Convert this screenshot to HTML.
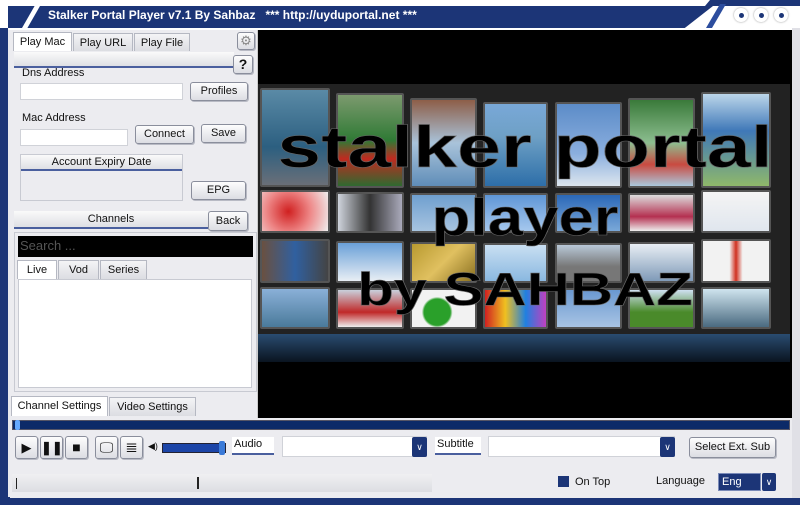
<!DOCTYPE html>
<html><head><meta charset="utf-8"><style>
*{margin:0;padding:0;box-sizing:border-box}
body{width:800px;height:505px;overflow:hidden;background:#e9e9ee;font-family:"Liberation Sans",sans-serif;font-size:11px;color:#111;position:relative}
.a{position:absolute}
.btn{position:absolute;background:linear-gradient(#fdfdfd,#dcdde3);border:1px solid #8a8e9c;border-radius:3px;text-align:center;font-size:11px;box-shadow:1px 1px 0 #b8bac4}
.inp{position:absolute;background:#fff;border:1px solid #d0d2d8}
.tab{position:absolute;background:linear-gradient(#f4f4f6,#dcdde2);border:1px solid #b5b8c2;border-bottom:none;text-align:center;font-size:11px;padding-top:3px}
.tab.on{background:#fff}
.t{position:absolute;border:2px solid #555;border-radius:2px}
.dd{position:absolute;background:#1c3577;color:#fff;font-size:9px;text-align:center;border-radius:2px}
.big{position:absolute;left:258px;width:534px;text-align:center;font-family:"Liberation Sans",sans-serif;font-weight:bold;color:#000;-webkit-text-stroke:0.6px #666;white-space:nowrap}
</style></head><body>
<div class="a" style="left:0;top:0;width:800px;height:30px;background:#fff"></div>
<div class="a" style="left:8px;top:6px;width:705px;height:22px;background:#1c3577;clip-path:polygon(0 0,100% 0,96% 100%,0 100%)"></div>
<div class="a" style="left:700px;top:0;width:100px;height:6px;background:#1c3577;clip-path:polygon(10% 0,100% 0,100% 100%,5% 100%)"></div>
<div class="a" style="left:22px;top:6px;width:18px;height:22px;background:#fff;clip-path:polygon(70% 0,100% 0,30% 100%,0 100%)"></div>
<div class="a" style="left:706px;top:4px;width:20px;height:24px;background:#2c4d9e;clip-path:polygon(70% 0,100% 0,30% 100%,0 100%)"></div>
<div class="a" style="left:48px;top:8px;color:#fff;font-weight:bold;font-size:12px;white-space:pre">Stalker Portal Player v7.1 By Sahbaz   *** http://uyduportal.net ***</div>
<div class="a" style="left:734px;top:8px;width:14px;height:14px;border-radius:7px;background:#fff;box-shadow:0 0 2px #999"></div>
<div class="a" style="left:739px;top:13px;width:5px;height:5px;border-radius:3px;background:#1c3577"></div>
<div class="a" style="left:754px;top:8px;width:14px;height:14px;border-radius:7px;background:#fff;box-shadow:0 0 2px #999"></div>
<div class="a" style="left:759px;top:13px;width:5px;height:5px;border-radius:3px;background:#1c3577"></div>
<div class="a" style="left:774px;top:8px;width:14px;height:14px;border-radius:7px;background:#fff;box-shadow:0 0 2px #999"></div>
<div class="a" style="left:779px;top:13px;width:5px;height:5px;border-radius:3px;background:#1c3577"></div>
<div class="a" style="left:0;top:28px;width:8px;height:477px;background:#1c3577"></div>
<div class="a" style="left:0;top:497px;width:800px;height:8px;background:#1c3577"></div>
<div class="a" style="left:792px;top:28px;width:8px;height:470px;background:#e0e0e6"></div>

<div class="a" style="left:10px;top:30px;width:248px;height:388px;background:#ececf0;border-right:1px solid #ccc"></div>
<div class="tab on" style="left:13px;top:32px;width:59px;height:19px">Play Mac</div>
<div class="tab" style="left:73px;top:33px;width:60px;height:18px">Play URL</div>
<div class="tab" style="left:134px;top:33px;width:56px;height:18px">Play File</div>
<div class="btn" style="left:237px;top:32px;width:18px;height:18px;color:#888;font-size:13px;line-height:16px">⚙</div>
<div class="a" style="left:14px;top:52px;width:220px;height:16px;background:linear-gradient(#fafafa,#dedfe4);border-bottom:2px solid #4a5f9e"></div>
<div class="btn" style="left:233px;top:55px;width:20px;height:19px;font-weight:bold;font-size:14px;line-height:17px">?</div>
<div class="a" style="left:22px;top:67px">Dns Address</div>
<div class="inp" style="left:20px;top:83px;width:163px;height:17px"></div>
<div class="btn" style="left:190px;top:82px;width:58px;height:19px;line-height:17px">Profiles</div>
<div class="a" style="left:22px;top:112px">Mac Address</div>
<div class="inp" style="left:20px;top:129px;width:108px;height:17px"></div>
<div class="btn" style="left:135px;top:125px;width:59px;height:19px;line-height:17px">Connect</div>
<div class="btn" style="left:201px;top:124px;width:45px;height:19px;line-height:17px">Save</div>
<div class="a" style="left:20px;top:154px;width:163px;height:47px;border:1px solid #c8cad2;background:#ececf0"></div>
<div class="a" style="left:21px;top:155px;width:161px;height:16px;background:linear-gradient(#fafafa,#dedfe4);border-bottom:2px solid #4a5f9e;text-align:center;padding-top:1px">Account Expiry Date</div>
<div class="btn" style="left:191px;top:181px;width:55px;height:19px;line-height:17px">EPG</div>
<div class="a" style="left:14px;top:211px;width:194px;height:18px;background:linear-gradient(#fafafa,#dedfe4);border-bottom:2px solid #4a5f9e;text-align:center;padding-top:2px">Channels</div>
<div class="btn" style="left:208px;top:211px;width:40px;height:20px;line-height:18px">Back</div>
<div class="a" style="left:14px;top:232px;width:243px;height:160px;border:1px solid #c8cad2"></div>
<div class="a" style="left:18px;top:236px;width:235px;height:21px;background:#000;color:#555;font-size:13px;padding:2px 2px">Search ...</div>
<div class="tab on" style="left:17px;top:260px;width:40px;height:19px">Live</div>
<div class="tab" style="left:58px;top:260px;width:41px;height:19px">Vod</div>
<div class="tab" style="left:100px;top:260px;width:47px;height:19px">Series</div>
<div class="a" style="left:18px;top:279px;width:234px;height:109px;background:#fff;border:1px solid #c8cad2"></div>
<div class="tab on" style="left:11px;top:396px;width:97px;height:20px">Channel Settings</div>
<div class="tab" style="left:109px;top:397px;width:87px;height:19px">Video Settings</div>

<div class="a" style="left:258px;top:30px;width:534px;height:388px;background:#000"></div>
<div class="a" style="left:258px;top:84px;width:532px;height:250px;background:#222"></div>
<div class="t" style="left:260px;top:88px;width:70px;height:99px;background:linear-gradient(#5a8aa6,#2c5f80 60%,#6a6f78)"></div>
<div class="t" style="left:336px;top:93px;width:68px;height:95px;background:linear-gradient(#7c9a6e,#2f7a35 50%,#c02a20 70%,#2f6a30)"></div>
<div class="t" style="left:410px;top:98px;width:67px;height:90px;background:linear-gradient(#8d5e48,#a9c3da 50%,#5f8db8)"></div>
<div class="t" style="left:483px;top:102px;width:65px;height:86px;background:linear-gradient(#79a8d8,#6ea0c5 40%,#2d6ea8)"></div>
<div class="t" style="left:555px;top:102px;width:67px;height:86px;background:linear-gradient(#5c8cc8,#8aaede 60%,#dde6ee)"></div>
<div class="t" style="left:628px;top:98px;width:67px;height:90px;background:linear-gradient(#3a7a3a,#8dbe90 50%,#c94a40 75%,#aac8dd)"></div>
<div class="t" style="left:701px;top:92px;width:70px;height:96px;background:linear-gradient(#bcd6ea,#3f78b8 40%,#8fb86a)"></div>
<div class="t" style="left:260px;top:190px;width:70px;height:43px;background:radial-gradient(circle at 40% 50%,#d02020,#e88 50%,#eee)"></div>
<div class="t" style="left:336px;top:192px;width:68px;height:41px;background:linear-gradient(90deg,#cfd4dc,#333 50%,#aab)"></div>
<div class="t" style="left:410px;top:193px;width:67px;height:40px;background:linear-gradient(#6f9fcf,#a7c4e0)"></div>
<div class="t" style="left:483px;top:193px;width:65px;height:40px;background:linear-gradient(#5f96d6,#a6c8ee)"></div>
<div class="t" style="left:555px;top:193px;width:67px;height:40px;background:linear-gradient(#2b68b8,#7aa8d8)"></div>
<div class="t" style="left:628px;top:193px;width:67px;height:40px;background:linear-gradient(#ddd,#b43050 60%,#eee)"></div>
<div class="t" style="left:701px;top:190px;width:70px;height:43px;background:linear-gradient(#f4f4f4,#e0e6ee)"></div>
<div class="t" style="left:260px;top:239px;width:70px;height:44px;background:linear-gradient(90deg,#6a5040,#3060a0 50%,#444)"></div>
<div class="t" style="left:336px;top:241px;width:68px;height:42px;background:linear-gradient(#6aa0d8,#e8eef4)"></div>
<div class="t" style="left:410px;top:242px;width:67px;height:41px;background:linear-gradient(135deg,#b89a30,#e0c060,#8a7020)"></div>
<div class="t" style="left:483px;top:243px;width:65px;height:40px;background:linear-gradient(#c9dff2,#8ab8e0)"></div>
<div class="t" style="left:555px;top:243px;width:67px;height:40px;background:linear-gradient(#b8c8d8,#777 60%)"></div>
<div class="t" style="left:628px;top:242px;width:67px;height:41px;background:linear-gradient(#e8eef4,#7f9ab8)"></div>
<div class="t" style="left:701px;top:239px;width:70px;height:44px;background:linear-gradient(90deg,#f2f2f2 40%,#d03020 50%,#f2f2f2 60%)"></div>
<div class="t" style="left:260px;top:287px;width:70px;height:42px;background:linear-gradient(#8ab0d8,#4a7a9a)"></div>
<div class="t" style="left:336px;top:288px;width:68px;height:41px;background:linear-gradient(#c9d0dc,#c02828 60%,#eee)"></div>
<div class="t" style="left:410px;top:288px;width:67px;height:41px;background:radial-gradient(circle at 40% 60%,#2aa02a 30%,#f2f2f2 35%)"></div>
<div class="t" style="left:483px;top:288px;width:65px;height:41px;background:linear-gradient(90deg,#d02020,#f0c020,#2080e0,#c040c0)"></div>
<div class="t" style="left:555px;top:288px;width:67px;height:41px;background:linear-gradient(#6a98d0,#a8c4e4)"></div>
<div class="t" style="left:628px;top:288px;width:67px;height:41px;background:linear-gradient(#cfe0f2,#4a8a2a 60%)"></div>
<div class="t" style="left:701px;top:287px;width:70px;height:42px;background:linear-gradient(#cfe4ee,#4a6a80)"></div>
<div class="a" style="left:258px;top:334px;width:532px;height:28px;background:linear-gradient(#2a4c70,#0a1420)"></div>

<div class="big" style="top:118px;font-size:58px;line-height:60px;transform:scaleX(1.36)">stalker portal</div>
<div class="big" style="top:190px;font-size:52px;line-height:56px;transform:scaleX(1.22)">player</div>
<div class="big" style="top:265px;font-size:46px;line-height:48px;transform:scaleX(1.3)">by SAHBAZ</div>

<div class="a" style="left:10px;top:418px;width:782px;height:80px;background:#ececf0"></div>
<div class="a" style="left:12px;top:420px;width:778px;height:10px;background:#0c2a68;border:1px solid #556"></div>
<div class="a" style="left:15px;top:420px;width:5px;height:10px;background:#6af;border-radius:2px"></div>
<div class="btn" style="left:15px;top:436px;width:23px;height:23px;font-size:13px;line-height:21px">▶</div>
<div class="btn" style="left:40px;top:436px;width:23px;height:23px;font-size:13px;line-height:21px;font-weight:bold">❚❚</div>
<div class="btn" style="left:65px;top:436px;width:23px;height:23px;font-size:14px;line-height:21px">■</div>
<div class="btn" style="left:95px;top:436px;width:23px;height:23px;font-size:14px;line-height:21px">🖵</div>
<div class="btn" style="left:120px;top:436px;width:23px;height:23px;font-size:15px;line-height:21px">≣</div>
<div class="a" style="left:148px;top:441px;font-size:9px">◀)</div>
<div class="a" style="left:162px;top:443px;width:64px;height:10px;background:#1c45a8;border:1px solid #223"></div>
<div class="a" style="left:219px;top:441px;width:6px;height:14px;background:#3a7ad8;border-radius:2px"></div>
<div class="a" style="left:232px;top:437px;width:42px;height:18px;background:#fff;border-bottom:2px solid #4a5f9e;padding:1px 2px">Audio</div>
<div class="inp" style="left:282px;top:436px;width:145px;height:21px"></div>
<div class="dd" style="left:412px;top:437px;width:15px;height:20px;line-height:20px">∨</div>
<div class="a" style="left:435px;top:437px;width:46px;height:18px;background:#fff;border-bottom:2px solid #4a5f9e;padding:1px 2px">Subtitle</div>
<div class="inp" style="left:488px;top:436px;width:187px;height:21px"></div>
<div class="dd" style="left:660px;top:437px;width:15px;height:20px;line-height:20px">∨</div>
<div class="btn" style="left:689px;top:437px;width:87px;height:21px;line-height:19px">Select Ext. Sub</div>
<div class="a" style="left:12px;top:474px;width:420px;height:18px;background:linear-gradient(#f0f0f2,#dcdde2)"></div>
<div class="a" style="left:16px;top:478px;width:1px;height:11px;background:#222"></div>
<div class="a" style="left:197px;top:477px;width:2px;height:12px;background:#222"></div>
<div class="a" style="left:558px;top:476px;width:11px;height:11px;background:#1c3577"></div>
<div class="a" style="left:575px;top:476px">On Top</div>
<div class="a" style="left:656px;top:475px">Language</div>
<div class="a" style="left:718px;top:473px;width:43px;height:18px;background:#1c3577;color:#fff;padding:2px 3px;border:1px solid #7a8ab8">Eng</div>
<div class="dd" style="left:762px;top:473px;width:14px;height:18px;line-height:18px">∨</div>
</body></html>
